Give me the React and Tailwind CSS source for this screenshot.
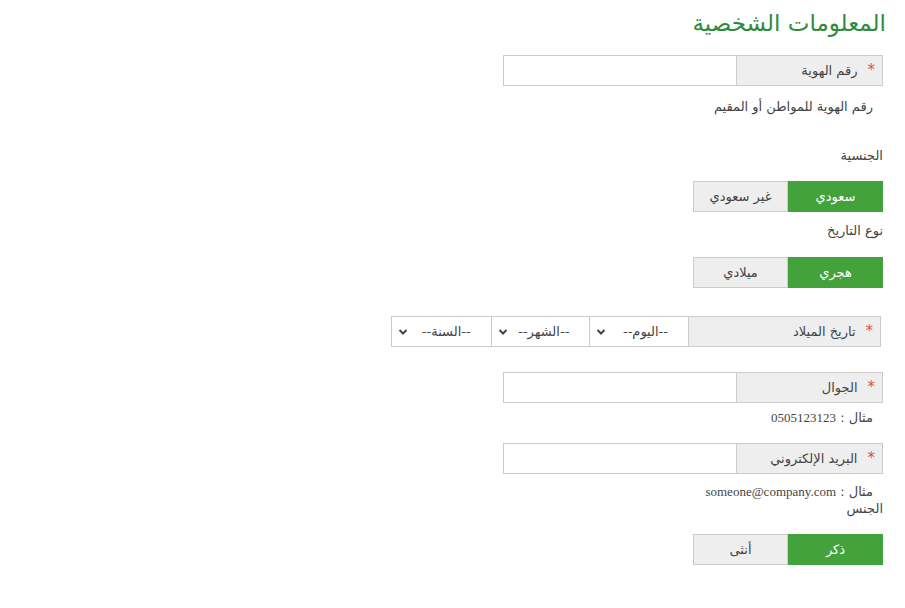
import React from 'react';

const Star = () => <span className="text-[#d9534f] text-[15px] ml-[10px]">*</span>;

const InputGroup = ({ label }) => (
  <div className="flex h-[31px] w-[380px] border border-[#cccccc]">
    <div className="w-[146px] shrink-0 bg-[#eeeeee] border-l border-[#cccccc] flex items-center pr-[7px]">
      <Star />
      <span>{label}</span>
    </div>
    <input className="flex-1 bg-white outline-none px-2" />
  </div>
);

const Toggle = ({ a, b }) => (
  <div className="flex h-[31px] w-[190px] text-[13px]">
    <div className="w-[95px] bg-[#43a23c] text-white flex items-center justify-center border border-[#43a23c]">{a}</div>
    <div className="w-[95px] bg-[#eeeeee] flex items-center justify-center border border-[#cccccc]">{b}</div>
  </div>
);

const Select = ({ label }) => (
  <div className="w-[100px] h-full border-l border-[#cccccc] last:border-l-0 flex items-center justify-between whitespace-nowrap pr-[20px] pl-[6px]">
    <span>{label}</span>
    <svg width="10" height="8" viewBox="0 0 10 8"><path d="M1.5 2 L5 5.5 L8.5 2" stroke="#444" strokeWidth="2" fill="none" /></svg>
  </div>
);

export default function App() {
  return (
    <div dir="rtl" className="min-h-screen bg-white text-[#444] text-[13px] pr-[22px] pt-[8px]" style={{ fontFamily: '"DejaVu Sans", sans-serif' }}>
      <h1 className="text-[#2e8b3e] text-[23px] leading-[30px] -mr-[3px] mb-[17px]">المعلومات الشخصية</h1>

      <InputGroup label="رقم الهوية" />
      <p className="pr-[10px] mt-[12px] leading-[18px]">رقم الهوية للمواطن أو المقيم</p>

      <p className="mt-[31px] leading-[18px]">الجنسية</p>
      <div className="mt-[16px]"><Toggle a="سعودي" b="غير سعودي" /></div>
      <p className="mt-[10px] leading-[18px]">نوع التاريخ</p>
      <div className="mt-[17px]"><Toggle a="هجري" b="ميلادي" /></div>

      <div className="mt-[28px] mr-[2px] flex h-[31px] w-[490px] border border-[#cccccc]">
        <div className="w-[192px] shrink-0 bg-[#eeeeee] border-l border-[#cccccc] flex items-center pr-[7px]">
          <Star />
          <span>تاريخ الميلاد</span>
        </div>
        <Select label="--اليوم--" />
        <Select label="--الشهر--" />
        <Select label="--السنة--" />
      </div>

      <div className="mt-[25px]"><InputGroup label="الجوال" /></div>
      <p className="pr-[10px] mt-[6px] leading-[18px]">مثال : <span style={{ fontFamily: '"Liberation Serif", serif' }}>0505123123</span></p>

      <div className="mt-[16px]"><InputGroup label="البريد الإلكتروني" /></div>
      <p className="pr-[10px] mt-[10px] leading-[16px]">مثال : <span style={{ fontFamily: '"Liberation Serif", serif' }}>someone@company.com</span></p>
      <p className="leading-[18px]">الجنس</p>
      <div className="mt-[16px]"><Toggle a="ذكر" b="أنثى" /></div>
    </div>
  );
}
